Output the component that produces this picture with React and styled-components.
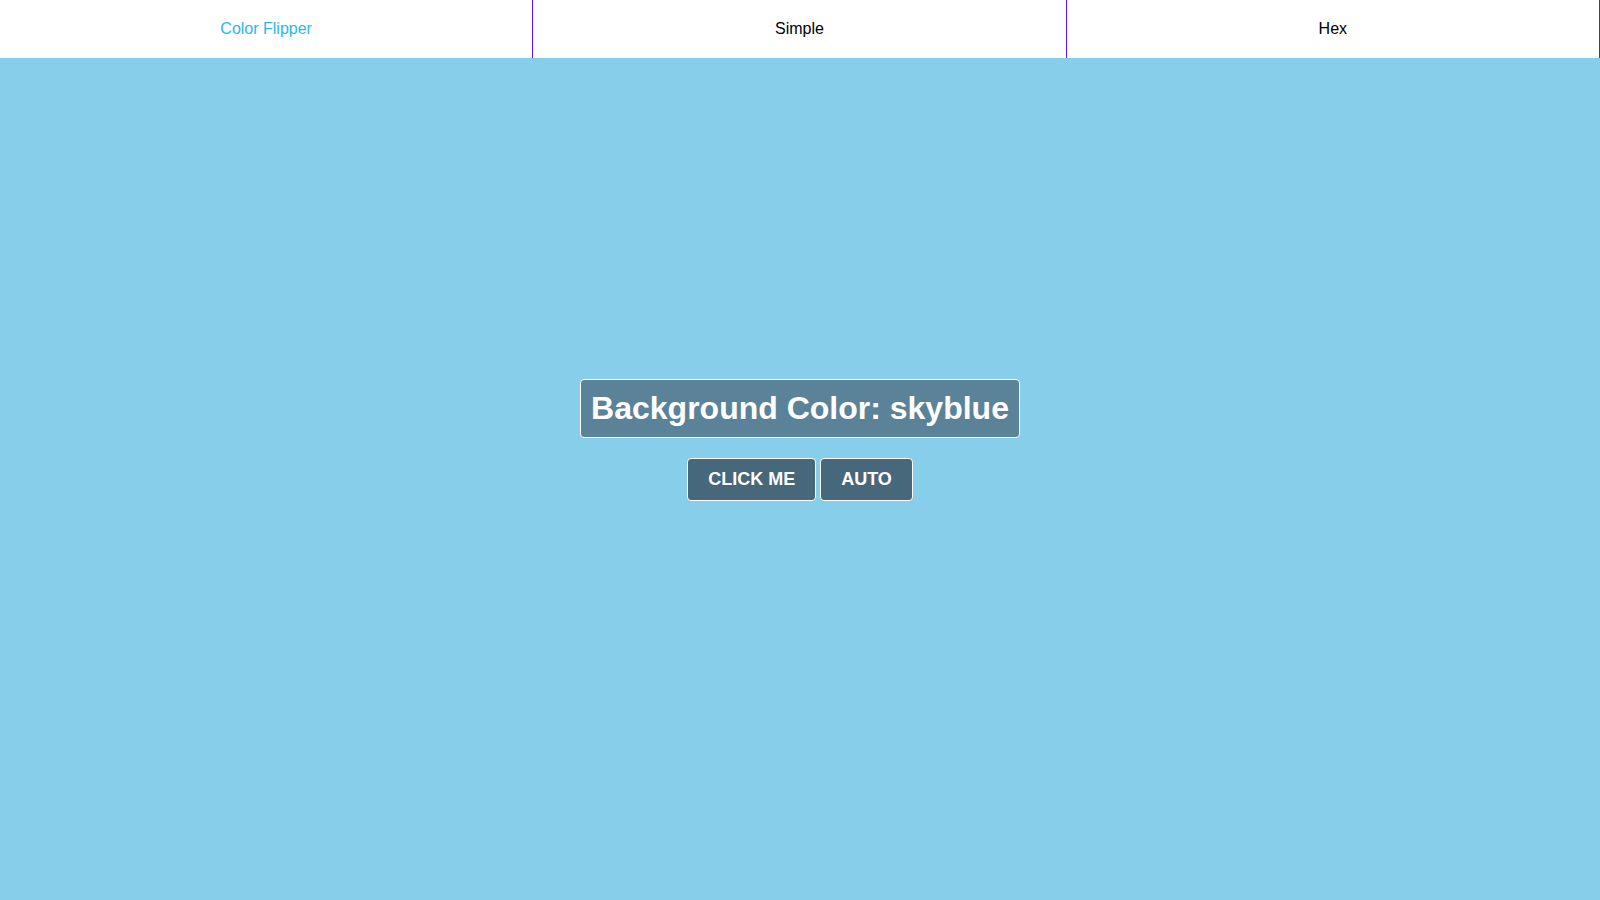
import styled, { createGlobalStyle } from 'styled-components';

const GlobalStyle = createGlobalStyle`
  * {
    box-sizing: border-box;
  }
  body {
    margin: 0;
    font-family: "Liberation Sans", Arial, sans-serif;
  }
`;

const links = [
  { label: 'Color Flipper', active: true },
  { label: 'Simple' },
  { label: 'Hex' },
];

const App = () => {
  return (
    <Page>
      <GlobalStyle />
      <Nav>
        {links.map((link) => (
          <NavItem key={link.label} $active={link.active}>
            {link.label}
          </NavItem>
        ))}
      </Nav>
      <Main>
        <Title>Background Color: skyblue</Title>
        <Buttons>
          <Button>CLICK ME</Button>
          <Button>AUTO</Button>
        </Buttons>
      </Main>
    </Page>
  );
};

export default App;

const Page = styled.div`
  display: flex;
  flex-direction: column;
  height: 100vh;
  background-color: skyblue;
`;

const Nav = styled.nav`
  display: grid;
  grid-template-columns: repeat(3, 1fr);
  background-color: #fff;
`;

const NavItem = styled.a`
  display: block;
  padding: 20px 0;
  font-size: 16px;
  line-height: 18px;
  text-align: center;
  color: ${(p) => (p.$active ? '#29b6f6' : '#000')};
  border-right: 1px solid #6a0dff;
  cursor: pointer;
`;

const Main = styled.main`
  flex: 1;
  display: flex;
  flex-direction: column;
  align-items: center;
  justify-content: center;
  padding-bottom: 78px;
`;

const Title = styled.h1`
  margin: 0 0 20px;
  padding: 10px;
  font-size: 32px;
  font-weight: 700;
  color: #fff;
  background-color: #5a8399;
  border: 1px solid #fff;
  border-radius: 4px;
`;

const Buttons = styled.div`
  display: flex;
  gap: 4px;
`;

const Button = styled.button`
  padding: 10px 20px;
  font-family: "Liberation Sans", Arial, sans-serif;
  font-size: 18px;
  font-weight: 700;
  color: #fff;
  background-color: #47677a;
  border: 1px solid #fff;
  border-radius: 4px;
  cursor: pointer;
`;
